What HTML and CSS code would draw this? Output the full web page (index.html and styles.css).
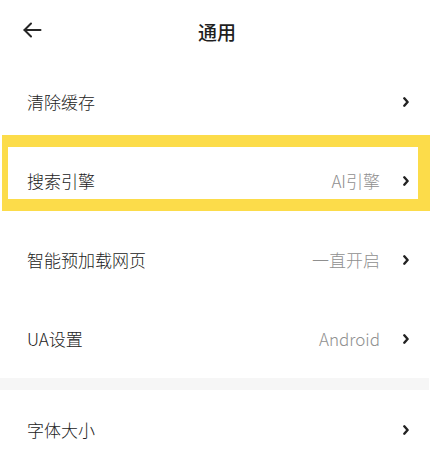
FILE: index.html
```html
<!DOCTYPE html>
<html lang="zh-CN">
<head>
<meta charset="utf-8">
<title>通用</title>
<link rel="stylesheet" href="styles.css">
</head>
<body>
<div class="page">
  <header class="header">
    <span class="back">
      <svg width="20" height="16" viewBox="0 0 20 16" fill="none" stroke="#262626" stroke-width="2" stroke-linecap="round" stroke-linejoin="round"><path d="M2.5 8H18.5"/><path d="M9 1.5L2.5 8L9 14.5"/></svg>
    </span>
    <h1 class="title">通用</h1>
  </header>
  <div class="row"><span class="label">清除缓存</span><span class="right"><svg class="chev" width="6" height="10" viewBox="0 0 6 10" fill="none" stroke="#222" stroke-width="2.4" stroke-linecap="round" stroke-linejoin="round"><path d="M1.3 1.3L4.6 5L1.3 8.7"/></svg></span></div>
  <div class="row"><span class="label">搜索引擎</span><span class="right"><span class="value">AI引擎</span><svg class="chev" width="6" height="10" viewBox="0 0 6 10" fill="none" stroke="#222" stroke-width="2.4" stroke-linecap="round" stroke-linejoin="round"><path d="M1.3 1.3L4.6 5L1.3 8.7"/></svg></span></div>
  <div class="row"><span class="label">智能预加载网页</span><span class="right"><span class="value">一直开启</span><svg class="chev" width="6" height="10" viewBox="0 0 6 10" fill="none" stroke="#222" stroke-width="2.4" stroke-linecap="round" stroke-linejoin="round"><path d="M1.3 1.3L4.6 5L1.3 8.7"/></svg></span></div>
  <div class="row"><span class="label">UA设置</span><span class="right"><span class="value">Android</span><svg class="chev" width="6" height="10" viewBox="0 0 6 10" fill="none" stroke="#222" stroke-width="2.4" stroke-linecap="round" stroke-linejoin="round"><path d="M1.3 1.3L4.6 5L1.3 8.7"/></svg></span></div>
  <div class="gap"></div>
  <div class="row"><span class="label">字体大小</span><span class="right"><svg class="chev" width="6" height="10" viewBox="0 0 6 10" fill="none" stroke="#222" stroke-width="2.4" stroke-linecap="round" stroke-linejoin="round"><path d="M1.3 1.3L4.6 5L1.3 8.7"/></svg></span></div>
  <div class="highlight"></div>
</div>
</body>
</html>
```
FILE: styles.css
```css
html, body {
  margin: 0;
  padding: 0;
  background: #ffffff;
}
body {
  font-family: "Noto Sans CJK SC", "Noto Sans", sans-serif;
  color: #262626;
  overflow: hidden;
}
.page {
  position: relative;
  width: 432px;
  height: 462px;
  overflow: hidden;
}
.header {
  position: relative;
  height: 62px;
  display: flex;
  align-items: center;
  justify-content: center;
}
.back {
  position: absolute;
  left: 22px;
  top: 22px;
  display: flex;
}
.title {
  margin: 0;
  font-size: 19px;
  font-weight: 500;
  color: #1f1f1f;
  line-height: 1;
  margin-left: 2px;
}
.row {
  height: 79px;
  display: flex;
  align-items: center;
  justify-content: space-between;
  padding: 0 23px 0 27px;
  font-size: 17px;
  font-weight: 300;
}
.label {
  color: #222222;
}
.right {
  display: flex;
  align-items: center;
  gap: 23px;
}
.value {
  color: #8f8f8f;
}
.chev {
  display: block;
}
.gap {
  height: 12px;
  background: #f6f6f6;
  margin-right: 3px;
}
.highlight {
  position: absolute;
  left: 2px;
  top: 135px;
  width: 410px;
  height: 52px;
  border-style: solid;
  border-color: #fcdc4a;
  border-width: 12px 12px 12px 6px;
}
```
